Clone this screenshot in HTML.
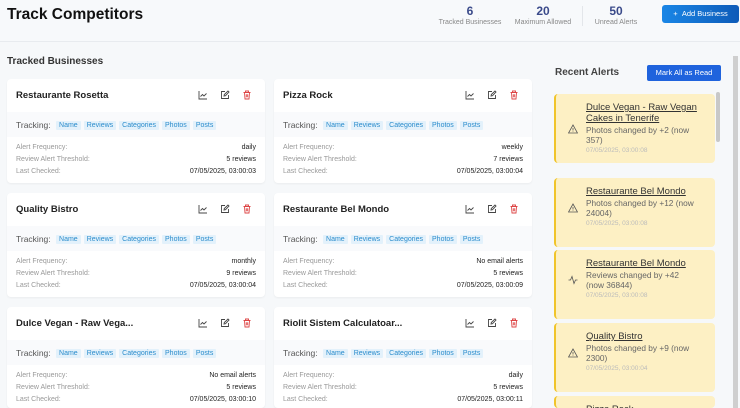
<!DOCTYPE html>
<html><head><meta charset="utf-8"><style>
*{box-sizing:border-box;margin:0;padding:0}
html,body{width:740px;height:408px;overflow:hidden}
body{background:#f6f8fa;font-family:"Liberation Sans",sans-serif;position:relative;color:#111}
.abs{position:absolute}
.hdr{left:0;top:0;width:740px;height:42px;border-bottom:1px solid #e8ebef;background:#f7f9fb}
h1{position:absolute;left:7px;top:6px;font-size:15.5px;font-weight:bold}
.stat{position:absolute;top:4px;text-align:center;width:80px}
.stat b{display:block;font-size:12px;color:#3a4a8a}
.stat span{display:block;font-size:7px;color:#888;margin-top:1px}
.add{left:662px;top:5px;width:77px;height:18px;background:linear-gradient(90deg,#1a86e6,#0d5bb8);border-radius:3px;color:#fff;font-size:7.5px;line-height:18px;text-align:center}
.card{position:absolute;width:258px;height:104px;background:#fff;border-radius:4px;box-shadow:0 1px 2px rgba(0,0,0,.05)}
.card .t{position:absolute;left:9px;top:11px;font-size:9.5px;font-weight:bold;color:#222}
.card .band{position:absolute;left:0;top:33px;width:100%;height:25px;background:#f9fafc}
.card .tr{position:absolute;left:9px;top:41px;font-size:8.5px;color:#555;white-space:nowrap}
.tag{display:inline-block;background:#e3f1fb;color:#2a8ccc;font-size:7px;padding:1px 3px;margin-left:3px;border-radius:1px;vertical-align:1px}
.row{position:absolute;left:9px;right:9px;font-size:7px;color:#999}
.row b{float:right;font-weight:normal;color:#222}
.ic{position:absolute;top:11px;width:10px;height:10px}
.list{position:absolute;left:554px;top:0;width:162px;height:408px;overflow:hidden}
.alert{position:absolute;left:0;width:161px;background:#fdf0c4;border-left:2px solid #f0c42a;border-radius:4px;padding:8px 10px 0 30px}
.alert .n{font-size:9.5px;color:#333;text-decoration:underline;line-height:11px}
.alert .d{font-size:8.3px;color:#666;line-height:10px;margin-top:1px;width:112px}
.alert .ts{font-size:6.5px;color:#bbb;margin-top:2px}
.alert svg{position:absolute;left:12px}
</style></head><body>
<div class="abs hdr"></div>
<h1>Track Competitors</h1>
<div class="stat" style="left:430px"><b>6</b><span>Tracked Businesses</span></div>
<div class="stat" style="left:503px"><b>20</b><span>Maximum Allowed</span></div>
<div class="abs" style="left:582px;top:6px;width:1px;height:20px;background:#e3e6ea"></div>
<div class="stat" style="left:576px"><b>50</b><span>Unread Alerts</span></div>
<div class="abs add">+&nbsp;&nbsp;Add Business</div>
<div class="abs" style="left:7px;top:56px;font-size:10px;font-weight:bold;color:#333">Tracked Businesses</div>

<div id="cards"></div>

<div class="abs" style="left:555px;top:67px;font-size:10px;font-weight:bold;color:#444">Recent Alerts</div>
<div class="abs" style="left:647px;top:65px;width:74px;height:16px;background:#1f63dd;border-radius:2px;color:#fff;font-size:7.5px;line-height:16px;text-align:center">Mark All as Read</div>

<div class="list">
<div class="alert" style="top:94px;height:69px"><div class="n">Dulce Vegan - Raw Vegan Cakes in Tenerife</div><svg style="top:30px" width="10" height="10" viewBox="0 0 10 10"><path d="M5 1L9.5 9H.5Z M5 4v2.5M5 7.5v.5" fill="none" stroke="#555" stroke-width=".8"/></svg><div class="d">Photos changed by +2 (now 357)</div><div class="ts">07/05/2025, 03:00:08</div></div>
<div class="alert" style="top:178px;height:69px"><div class="n">Restaurante Bel Mondo</div><svg style="top:25px" width="10" height="10" viewBox="0 0 10 10"><path d="M5 1L9.5 9H.5Z M5 4v2.5M5 7.5v.5" fill="none" stroke="#555" stroke-width=".8"/></svg><div class="d">Photos changed by +12 (now 24004)</div><div class="ts">07/05/2025, 03:00:08</div></div>
<div class="alert" style="top:250px;height:69px"><div class="n">Restaurante Bel Mondo</div><svg style="top:25px" width="10" height="10" viewBox="0 0 10 10"><path d="M.5 5h2l1.5-3.5 2 7 1.5-3.5h2" fill="none" stroke="#555" stroke-width=".8"/></svg><div class="d">Reviews changed by +42 (now 36844)</div><div class="ts">07/05/2025, 03:00:08</div></div>
<div class="alert" style="top:323px;height:69px"><div class="n">Quality Bistro</div><svg style="top:25px" width="10" height="10" viewBox="0 0 10 10"><path d="M5 1L9.5 9H.5Z M5 4v2.5M5 7.5v.5" fill="none" stroke="#555" stroke-width=".8"/></svg><div class="d">Photos changed by +9 (now 2300)</div><div class="ts">07/05/2025, 03:00:04</div></div>
<div class="alert" style="top:396px;height:12px"><div class="n">Pizza Rock</div></div>
</div>
<div class="abs" style="left:716px;top:92px;width:4px;height:50px;background:#c8c8c8;border-radius:2px"></div>
<div class="abs" style="left:733px;top:56px;width:5px;height:352px;background:#cfcfcf"></div>

<script>
var d=[["Restaurante Rosetta","daily","5 reviews","07/05/2025, 03:00:03"],["Pizza Rock","weekly","7 reviews","07/05/2025, 03:00:04"],["Quality Bistro","monthly","9 reviews","07/05/2025, 03:00:04"],["Restaurante Bel Mondo","No email alerts","5 reviews","07/05/2025, 03:00:09"],["Dulce Vegan - Raw Vega...","No email alerts","5 reviews","07/05/2025, 03:00:10"],["Riolit Sistem Calculatoar...","daily","5 reviews","07/05/2025, 03:00:11"]];
var h="";
d.forEach(function(c,i){var x=i%2?274:7,y=79+Math.floor(i/2)*114;
var hh=(i>=4)?(408-y):104;
h+='<div class="card" style="left:'+x+'px;top:'+y+'px;height:'+hh+'px"><div class="t">'+c[0]+'</div>'+
'<svg class="ic" style="left:191px" viewBox="0 0 10 10"><path d="M1 1v8h8M2.5 6.5l2-2 1.5 1.5 2.5-2.5" fill="none" stroke="#444" stroke-width=".9"/></svg>'+
'<svg class="ic" style="left:213px" viewBox="0 0 10 10"><path d="M5 1.5H1.5v7h7V5M4 6l.3-1.5L8 1l1 1-3.5 3.7Z" fill="none" stroke="#444" stroke-width=".9"/></svg>'+
'<svg class="ic" style="left:235px" viewBox="0 0 10 10"><path d="M1.5 2.5h7M3.5 2.5V1h3v1.5M2.5 2.5l.5 6.5h4l.5-6.5M4.3 4.3v3M5.7 4.3v3" fill="none" stroke="#d44" stroke-width=".9"/></svg>'+
'<div class="band"></div><div class="tr">Tracking: <span class="tag">Name</span><span class="tag">Reviews</span><span class="tag">Categories</span><span class="tag">Photos</span><span class="tag">Posts</span></div>'+
'<div class="row" style="top:65px">Alert Frequency:<b>'+c[1]+'</b></div><div class="row" style="top:77px">Review Alert Threshold:<b>'+c[2]+'</b></div><div class="row" style="top:89px">Last Checked:<b>'+c[3]+'</b></div></div>';});
document.getElementById("cards").innerHTML=h;
</script>
</body></html>
